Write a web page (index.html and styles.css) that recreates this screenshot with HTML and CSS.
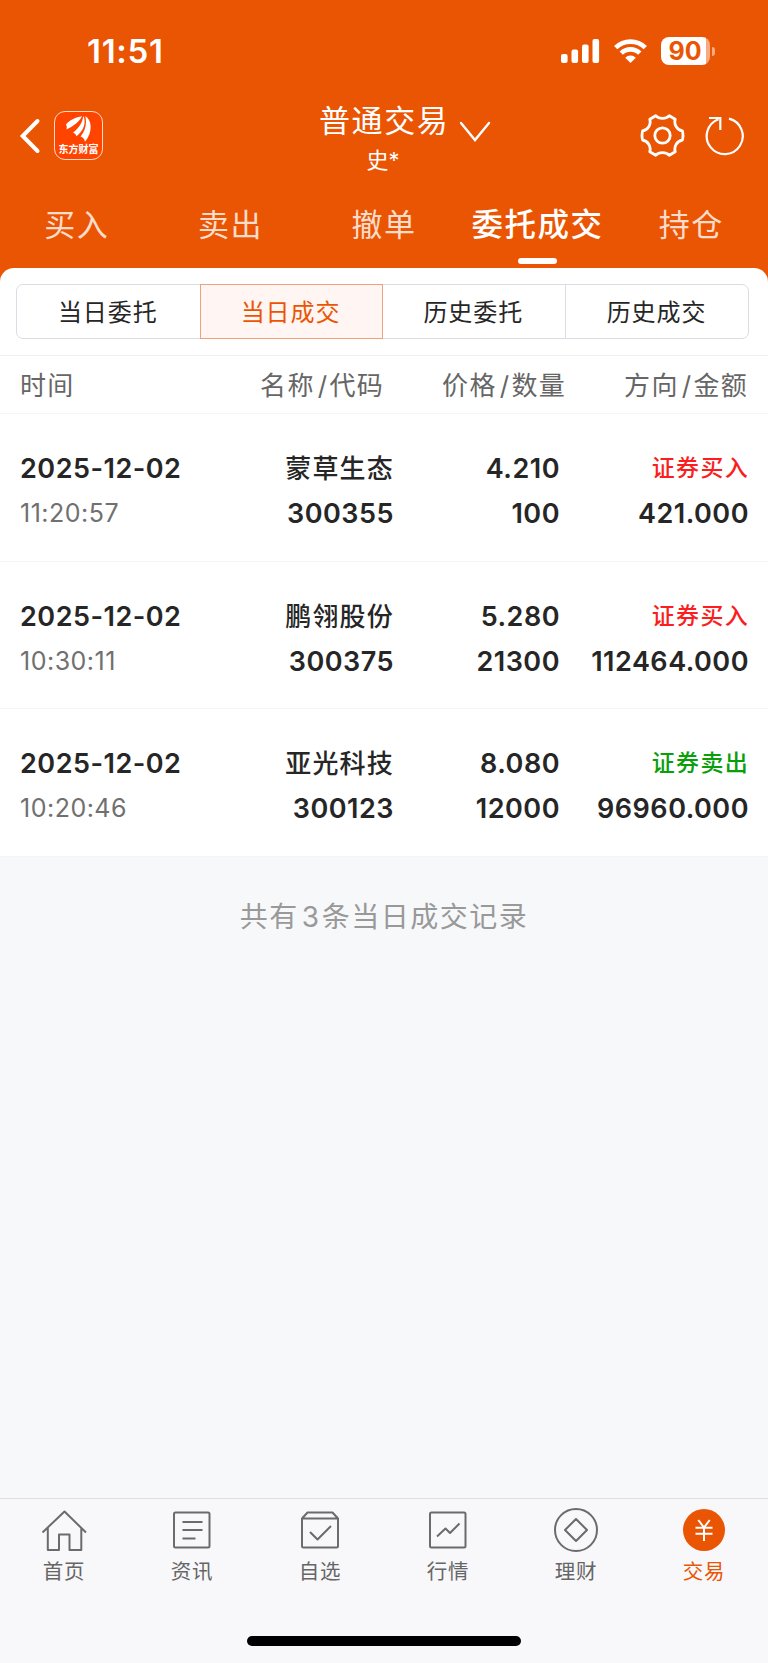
FILE: index.html
```html
<!DOCTYPE html>
<html lang="zh-CN">
<head>
  <meta charset="UTF-8" />
  <meta name="viewport" content="width=device-width, initial-scale=1.0"/>
  <title>普通交易</title>
  <link rel="stylesheet" href="styles.css">
</head>
<body>
  <header class="top">
    <div class="status-bar">
      <span class="clock">11:51</span>
      <div class="status-icons">
        <svg class="signal" width="39" height="24" viewBox="0 0 39 24" fill="#fff">
          <rect x="0" y="15" width="6.6" height="9" rx="2"/>
          <rect x="10.5" y="10.5" width="6.6" height="13.5" rx="2"/>
          <rect x="21" y="5.5" width="6.6" height="18.5" rx="2"/>
          <rect x="31.5" y="0" width="6.6" height="24" rx="2"/>
        </svg>
        <svg class="wifi" width="33" height="24" viewBox="0 0 33 24" fill="none" stroke="#fff" stroke-width="4.6">
          <path d="M1.700 8.700a21 21 0 0 1 29.600 0"/>
          <path d="M7.200 14.200a13.200 13.200 0 0 1 18.600 0"/>
          <path d="M16.500 24l-5.300-5.300a7.500 7.500 0 0 1 10.600 0z" fill="#fff" stroke="none"/>
        </svg>
        <div class="battery"><span>90</span></div>
        <div class="battery-cap"></div>
      </div>
    </div>
    <div class="nav-bar">
      <div class="nav-left">
        <svg width="22" height="36" viewBox="0 0 22 36" fill="none" stroke="#fff" stroke-width="4" stroke-linecap="round" stroke-linejoin="miter">
          <path d="M18.500 3L3.700 18l14.800 15"/>
        </svg>
        <div class="logo">
          <svg width="27" height="27" viewBox="0 0 27 27" fill="#fff">
            <path d="M1 9.500C5 4.500 11 2.500 17 1.300C14.500 6.500 9 11 1.500 14.500C2 12.500 1.800 11 1 9.500z"/>
            <path d="M8 17.800C14.500 12.500 17.500 7.500 18.300 1C21.500 7 19 15.500 11.500 21.300C11 19.500 9.800 18.300 8 17.800z"/>
            <path d="M15.600 21.500C20.500 15.500 22 8.500 20.300 1C27.500 5.500 27.500 17.500 20 26.700C19.500 24 18 22.300 15.600 21.500z"/>
          </svg>
          <span>东方财富</span>
        </div>
      </div>
      <div class="account">
        <div class="account-title">普通交易</div>
        <div class="account-name">史*</div>
      </div>
      <svg class="arrow" width="32" height="22" viewBox="0 0 32 22" fill="none" stroke="#fff" stroke-width="2.4" stroke-linecap="round">
        <path d="M2 2l14 17L30 2"/>
      </svg>
      <div class="nav-right">
        <svg width="45" height="45" viewBox="0 0 45 45" fill="none" stroke="#fff" stroke-width="2.8" stroke-linejoin="round">
          <path d="M15.700 2.800C19 6.300 26 6.300 29.300 2.800L35.200 6.300C33.700 11.500 37 17 42.400 18Q43.600 22.500 42.400 27C37 28 33.700 33.500 35.200 38.700L29.300 42.200C26 38.700 19 38.700 15.700 42.200L9.800 38.700C11.300 33.500 8 28 2.600 27Q1.400 22.500 2.600 18C8 17 11.300 11.500 9.800 6.300z"/>
          <circle cx="22.500" cy="22.500" r="7.700"/>
        </svg>
        <svg width="40" height="40" viewBox="0 0 40 40" fill="none" stroke="#fff" stroke-width="2.2">
          <path d="M24 2.600A18 18 0 1 1 13.500 3.200"/>
          <path d="M4 2h11.300v12"/>
        </svg>
      </div>
    </div>
    <nav class="tabs">
      <a>买入</a>
      <a>卖出</a>
      <a>撤单</a>
      <a class="active">委托成交</a>
      <a>持仓</a>
    </nav>
  </header>

  <main>
    <div class="panel">
      <div class="segment">
        <div>当日委托</div>
        <div class="on">当日成交</div>
        <div>历史委托</div>
        <div>历史成交</div>
      </div>
      <div class="row head">
        <span>时间</span>
        <span>名称<i>/</i>代码</span>
        <span>价格<i>/</i>数量</span>
        <span>方向<i>/</i>金额</span>
      </div>
      <div class="row">
        <div><b>2025-12-02</b><small>11:20:57</small></div>
        <div><b class="name">蒙草生态</b><b>300355</b></div>
        <div><b>4.210</b><b>100</b></div>
        <div><b class="side buy">证券买入</b><b>421.000</b></div>
      </div>
      <div class="row">
        <div><b>2025-12-02</b><small>10:30:11</small></div>
        <div><b class="name">鹏翎股份</b><b>300375</b></div>
        <div><b>5.280</b><b>21300</b></div>
        <div><b class="side buy">证券买入</b><b>112464.000</b></div>
      </div>
      <div class="row">
        <div><b>2025-12-02</b><small>10:20:46</small></div>
        <div><b class="name">亚光科技</b><b>300123</b></div>
        <div><b>8.080</b><b>12000</b></div>
        <div><b class="side sell">证券卖出</b><b>96960.000</b></div>
      </div>
    </div>
    <p class="total">共有<i>3</i>条当日成交记录</p>
  </main>

  <footer class="bottom">
    <nav class="menu">
      <a>
        <svg viewBox="0 0 46 46"><path d="M1.500 25.500L23.500 4.500l21.500 21M6.800 21v22H18V27.500h10.500V43h11.800V21"/></svg>
        首页
      </a>
      <a>
        <svg viewBox="0 0 46 46"><rect x="5" y="5.500" width="35.500" height="35" rx="1.500"/><path d="M13.500 15h20M13.500 23h20M13.500 31.500h13"/></svg>
        资讯
      </a>
      <a>
        <svg viewBox="0 0 46 46"><path d="M5 11.500l5.500-6h25l5.500 6v27.500q0 1.500-1.500 1.500h-33Q5 40.500 5 39zM5 11.500h36M13 25l7.500 7.500L34 19"/></svg>
        自选
      </a>
      <a>
        <svg viewBox="0 0 46 46"><rect x="5" y="5.500" width="35.500" height="35" rx="1.500"/><path d="M12 29.500l8.500-8 4.500 4.500 9.500-9.500"/></svg>
        行情
      </a>
      <a>
        <svg viewBox="0 0 46 46"><circle cx="23" cy="23" r="21"/><path d="M23 12l11 11-11 11-11-11z"/></svg>
        理财
      </a>
      <a class="active">
        <svg viewBox="0 0 46 46"><circle class="dot" cx="23" cy="23" r="21"/><path class="yen" d="M17.300 13l5.700 7.500 5.700-7.500M14.500 20.700h17M14.500 26.700h17M23 20v14"/></svg>
        交易
      </a>
    </nav>
    <div class="home-bar"></div>
  </footer>
</body>
</html>
```
FILE: styles.css
```css
* { box-sizing: border-box; }
body {
  margin: 0;
  height: 1663px;
  display: flex;
  flex-direction: column;
  font-family: Inter, 'Noto Sans CJK SC', sans-serif;
  background: #f7f8fa;
  color: #262626;
}
svg { display: block; flex: none; }
i { font-style: normal; }

/* header */
.top {
  height: 282px;
  background: #ea5504;
  color: #fff;
}
.status-bar {
  height: 102px;
  padding: 0 53px 0 87px;
  display: flex;
  justify-content: space-between;
  align-items: center;
}
.clock {
  font-size: 33px;
  font-weight: 600;
  letter-spacing: 0.7px;
}
.status-icons {
  display: flex;
  align-items: center;
}
.wifi { margin: 0 14px; }
.battery {
  width: 49px;
  height: 28px;
  padding-right: 1px;
  border-radius: 8px;
  background: linear-gradient(to right, #fff 45px, #f5aa82 45px);
  color: #ea5504;
  font-size: 25px;
  font-weight: 700;
  line-height: 28px;
  text-align: center;
}
.battery-cap {
  width: 3px;
  height: 9px;
  margin-left: 2px;
  border-radius: 0 4px 4px 0;
  background: #f5aa82;
}
.nav-bar {
  height: 83px;
  padding: 0 23px 0 19px;
  display: grid;
  grid-template-columns: 300px 128px 100px 1fr;
}
.nav-left {
  height: 67px;
  display: flex;
  align-items: center;
  gap: 13px;
}
.logo {
  width: 49px;
  height: 49px;
  padding-top: 3px;
  border: 1px solid #ffd9c8;
  border-radius: 11px;
  background: #ff4400;
  display: flex;
  flex-direction: column;
  align-items: center;
}
.logo span {
  font-family: 'Noto Sans CJK SC', sans-serif;
  font-size: 10px;
  font-weight: 700;
  line-height: 14px;
}
.account {
  text-align: center;
  white-space: nowrap;
}
.account-title {
  font-size: 31px;
  letter-spacing: 1.6px;
  line-height: 37px;
}
.account-name {
  font-size: 22px;
  line-height: 42px;
}
.arrow { margin: 19px 0 0 12px; }
.nav-right {
  height: 67px;
  display: flex;
  justify-content: flex-end;
  align-items: center;
  gap: 20px;
}
.tabs {
  display: grid;
  grid-template-columns: repeat(5, 1fr);
  text-align: center;
  font-size: 31px;
  letter-spacing: 1.5px;
  line-height: 80px;
}
.tabs a { color: #fcdcca; }
.tabs .active {
  color: #fff;
  font-size: 31.5px;
  font-weight: 500;
}
.tabs .active::after {
  content: '';
  display: block;
  width: 39px;
  height: 6px;
  margin: -7px auto 0;
  border-radius: 3px;
  background: #fff;
}

/* list */
main { flex: 1; }
.panel {
  margin-top: -14px;
  padding-top: 16px;
  border-radius: 14px 14px 0 0;
  background: #fff;
}
.segment {
  height: 55px;
  margin: 0 19px 16px 16px;
  border: 1px solid #dcdde4;
  border-radius: 7px;
  display: grid;
  grid-template-columns: repeat(4, 1fr);
  text-align: center;
  font-size: 24px;
  letter-spacing: 1px;
  line-height: 55px;
}
.segment div { height: 53px; padding-right: 1px; }
.segment div + div { border-left: 1px solid #dcdde4; }
.segment .on {
  height: 55px;
  margin: -1px 0;
  border: 1px solid #eea27c !important;
  background: #fff5f2;
  color: #ea5504;
}
.segment .on + div { border-left: none; }
.row {
  height: 147.5px;
  padding: 32px 19px 0 20px;
  border-bottom: 1px solid #f5f5f7;
  display: grid;
  grid-template-columns: 180px 194px 166px 189px;
  text-align: right;
  white-space: nowrap;
}
.row > :first-child { text-align: left; }
.row b, .row small {
  display: block;
  font-size: 27px;
  font-weight: 600;
  letter-spacing: 0.5px;
  line-height: 45px;
}
.row small {
  font-size: 25px;
  font-weight: 400;
  color: #707070;
}
.row .name {
  font-size: 26px;
  font-weight: 500;
  letter-spacing: 1.2px;
}
.row .side {
  font-size: 23px;
  font-weight: 500;
  letter-spacing: 1.3px;
}
.row .buy { color: #fa1e1e; }
.row .sell { color: #0a9e0a; }
.head {
  height: 59px;
  padding-top: 0;
  border-top: 1px solid #f0f0f2;
  grid-template-columns: 180px 184px 182px 182px;
  font-size: 26px;
  letter-spacing: 1.3px;
  line-height: 59px;
  color: #666;
}
.head i { margin: 0 1px 0 3px; }
.total {
  margin: 0;
  text-align: center;
  font-size: 28px;
  letter-spacing: 1.5px;
  line-height: 120px;
  color: #999;
}
.total i { margin: 0 1px 0 3px; }

/* bottom menu */
.bottom {
  height: 165px;
  border-top: 1px solid #dedee0;
  background: #f8f8fb;
}
.menu {
  height: 137px;
  padding-top: 8px;
  display: grid;
  grid-template-columns: repeat(6, 1fr);
  text-align: center;
  font-size: 20.5px;
  letter-spacing: 0.7px;
  line-height: 38px;
  color: #666;
}
.menu svg {
  width: 46px;
  height: 46px;
  margin: 0 auto;
  fill: none;
  stroke: #6b6b6b;
  stroke-width: 2;
  stroke-linejoin: round;
}
.menu .active { color: #ea5504; }
.menu .dot {
  fill: #ea5504;
  stroke: none;
}
.menu .yen { stroke: #fff; }
.home-bar {
  width: 274px;
  height: 10px;
  margin: 0 auto;
  border-radius: 5px;
  background: #000;
}
```
